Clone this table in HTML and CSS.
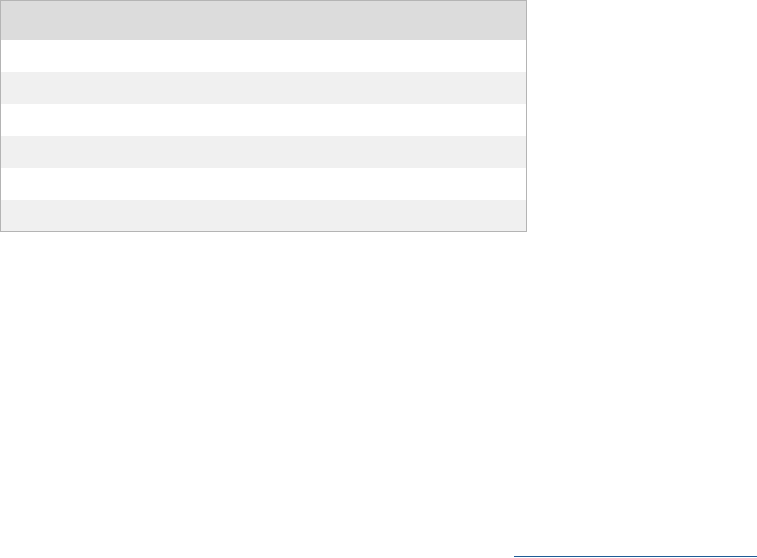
FILE: index.html
```html
<!DOCTYPE html>
<html>
<head>
<meta charset="utf-8">
<link rel="stylesheet" href="styles.css">
</head>
<body>
<div class="page">
  <table class="grid">
    <thead>
      <tr class="head"><th></th><th></th><th></th></tr>
    </thead>
    <tbody>
      <tr><td></td><td></td><td></td></tr>
      <tr class="alt"><td></td><td></td><td></td></tr>
      <tr><td></td><td></td><td></td></tr>
      <tr class="alt"><td></td><td></td><td></td></tr>
      <tr><td></td><td></td><td></td></tr>
      <tr class="alt"><td></td><td></td><td></td></tr>
    </tbody>
  </table>
  <div class="footer-line"></div>
</div>
</body>
</html>
```

FILE: styles.css
```css
html, body {
  margin: 0;
  padding: 0;
  background: #ffffff;
  font-family: "Liberation Sans", Arial, sans-serif;
}
.page {
  width: 757px;
  height: 558px;
  position: relative;
  overflow: hidden;
}
.grid {
  width: 527px;
  border-collapse: collapse;
  border: 1px solid #b4b4b4;
  border-spacing: 0;
}
.grid th, .grid td {
  padding: 0;
  border: none;
}
.grid .head th {
  height: 39px;
  background: #dcdcdc;
}
.grid td {
  height: 32px;
  background: #ffffff;
}
.grid .alt td {
  background: #f0f0f0;
}
.grid tbody tr:last-child td {
  height: 31px;
}
.footer-line {
  position: absolute;
  left: 514px;
  right: 0;
  top: 556px;
  height: 1px;
  background: #1f5a96;
}
```
